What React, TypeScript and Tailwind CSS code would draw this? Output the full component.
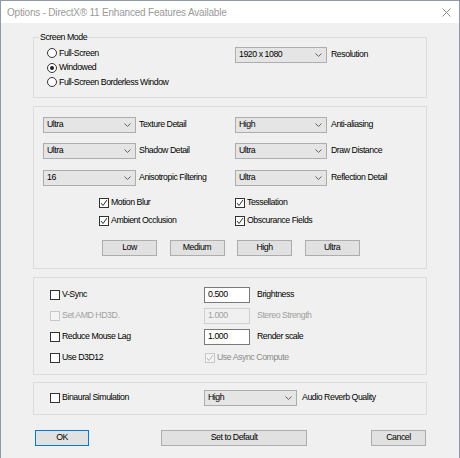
import React from "react"

const Chevron = () => (
    <svg width="7" height="4" viewBox="0 0 7 4" className="shrink-0">
        <path d="M0.5 0.5 L3.5 3.5 L6.5 0.5" fill="none" stroke="#606060" strokeWidth="1" />
    </svg>
)

const Select = ({ value, w }: { value: string, w: string }) => (
    <div className={`flex items-center justify-between h-[16px] border border-[#adadad] bg-[#e5e5e5] pl-[3px] pr-[4px] shrink-0 ${w}`}>
        <span>{value}</span>
        <Chevron />
    </div>
)

const Check = ({ label, checked = false, disabled = false, labelClass = "" }: { label: string, checked?: boolean, disabled?: boolean, labelClass?: string }) => (
    <div className="flex items-center">
        <div className={`w-[10px] h-[10px] border flex items-center justify-center shrink-0 ${disabled ? "border-[#c8c8c8] bg-[#f4f4f4]" : "border-[#333] bg-white"}`}>
            {checked && (
                <svg width="8" height="8" viewBox="0 0 8 8">
                    <path d="M1 4 L3 6.5 L7 1" fill="none" stroke={disabled ? "#b8b8b8" : "#333"} strokeWidth="1" />
                </svg>
            )}
        </div>
        <span className={`ml-[2px] ${disabled ? "text-[#a0a0a0]" : ""} ${labelClass}`}>{label}</span>
    </div>
)

const Radio = ({ label, checked = false }: { label: string, checked?: boolean }) => (
    <div className="flex items-center h-[14.5px]">
        <div className="w-[10px] h-[10px] rounded-full border border-[#333] bg-white flex items-center justify-center shrink-0">
            {checked && <div className="w-[4px] h-[4px] rounded-full bg-[#222]" />}
        </div>
        <span className="ml-[2px]">{label}</span>
    </div>
)

const Btn = ({ label, className = "" }: { label: string, className?: string }) => (
    <div className={`h-[16px] flex items-center justify-center border bg-[#e1e1e1] shrink-0 ${className}`}>
        {label}
    </div>
)

const TextBox = ({ value, disabled = false }: { value: string, disabled?: boolean }) => (
    <div className={`w-[46px] h-[16px] border flex items-center pl-[3px] shrink-0 ${disabled ? "border-[#d0d0d0] bg-[#f0f0f0] text-[#a0a0a0]" : "border-[#7a7a7a] bg-white"}`}>
        {value}
    </div>
)

const Group = ({ legend, className = "", children }: { legend?: string, className?: string, children: React.ReactNode }) => (
    <div className={`relative border border-[#dcdcdc] ${className}`}>
        {legend && (
            <span className="absolute -top-[7px] left-[5px] bg-[#f0f0f0] px-[1px] leading-[13px]">{legend}</span>
        )}
        {children}
    </div>
)

export default function App() {
    return (
        <div className="w-[460px] h-[458px] bg-[#f0f0f0] border-x border-t border-[#8d9aa8] flex flex-col text-[8.75px] tracking-[-0.45px] text-black font-['Liberation_Sans',Arial,sans-serif] overflow-hidden">
            {/* title bar */}
            <div className="h-[22px] bg-white flex items-center justify-between pl-[6px] pr-[8px] shrink-0">
                <span className="text-[10px] tracking-[-0.2px] text-[#9a9a9a]">Options - DirectX® 11 Enhanced Features Available</span>
                <svg width="9" height="9" viewBox="0 0 9 9">
                    <path d="M0.5 0.5 L8.5 8.5 M8.5 0.5 L0.5 8.5" stroke="#8a8a8a" strokeWidth="1" />
                </svg>
            </div>

            <div className="px-[32px] flex flex-col">
                {/* Screen mode */}
                <Group legend="Screen Mode" className="mt-[14px] h-[61px] flex">
                    <div className="w-[201px] pl-[13px] pt-[8px] flex flex-col">
                        <Radio label="Full-Screen" />
                        <Radio label="Windowed" checked />
                        <Radio label="Full-Screen Borderless Window" />
                    </div>
                    <div className="pt-[9px] flex items-start">
                        <Select value="1920 x 1080" w="w-[92px]" />
                        <span className="ml-[4px] h-[16px] flex items-center">Resolution</span>
                    </div>
                </Group>

                {/* Detail settings */}
                <Group className="mt-[8px] h-[163px] pt-[10px] flex flex-col">
                    {[
                        ["Ultra", "Texture Detail", "High", "Anti-aliasing", ""],
                        ["Ultra", "Shadow Detail", "Ultra", "Draw Distance", "mt-[10px]"],
                        ["16", "Anisotropic Filtering", "Ultra", "Reflection Detail", "mt-[11px]"],
                    ].map(([lv, ll, rv, rl, mt]) => (
                        <div key={ll} className={`flex h-[16px] ${mt}`}>
                            <div className="w-[201px] pl-[9px] flex items-center">
                                <Select value={lv} w="w-[93px]" />
                                <span className="ml-[3px]">{ll}</span>
                            </div>
                            <div className="flex items-center">
                                <Select value={rv} w="w-[92px]" />
                                <span className="ml-[4px]">{rl}</span>
                            </div>
                        </div>
                    ))}
                    <div className="flex h-[14px] mt-[10px]">
                        <div className="w-[201px] pl-[65px] flex items-center">
                            <Check label="Motion Blur" checked />
                        </div>
                        <Check label="Tessellation" checked />
                    </div>
                    <div className="flex h-[14px] mt-[4px]">
                        <div className="w-[201px] pl-[65px] flex items-center">
                            <Check label="Ambient Occlusion" checked />
                        </div>
                        <Check label="Obscurance Fields" checked />
                    </div>
                    <div className="flex gap-[12.5px] pl-[68px] mt-[12px]">
                        <Btn label="Low" className="w-[55px] border-[#adadad]" />
                        <Btn label="Medium" className="w-[55px] border-[#adadad]" />
                        <Btn label="High" className="w-[55px] border-[#adadad]" />
                        <Btn label="Ultra" className="w-[55px] border-[#adadad]" />
                    </div>
                </Group>

                {/* Misc settings */}
                <Group className="mt-[8px] h-[98px] pt-[9px] flex flex-col">
                    <div className="flex h-[16px] items-center">
                        <div className="w-[170px] pl-[16px]"><Check label="V-Sync" /></div>
                        <TextBox value="0.500" />
                        <span className="ml-[7px]">Brightness</span>
                    </div>
                    <div className="flex h-[16px] items-center mt-[5px]">
                        <div className="w-[170px] pl-[16px]"><Check label="Set AMD HD3D." disabled /></div>
                        <TextBox value="1.000" disabled />
                        <span className="ml-[7px] text-[#a0a0a0]">Stereo Strength</span>
                    </div>
                    <div className="flex h-[16px] items-center mt-[5px]">
                        <div className="w-[170px] pl-[16px]"><Check label="Reduce Mouse Lag" /></div>
                        <TextBox value="1.000" />
                        <span className="ml-[7px]">Render scale</span>
                    </div>
                    <div className="flex h-[16px] items-center mt-[5px]">
                        <div className="w-[171px] pl-[16px]"><Check label="Use D3D12" /></div>
                        <Check label="Use Async Compute" checked disabled labelClass="!text-[#8a8a8a]" />
                    </div>
                </Group>

                {/* Audio */}
                <Group className="mt-[7px] h-[33px] pt-[7px]">
                    <div className="flex h-[16px] items-center">
                        <div className="w-[170px] pl-[16px]"><Check label="Binaural Simulation" /></div>
                        <Select value="High" w="w-[93px]" />
                        <span className="ml-[5px]">Audio Reverb Quality</span>
                    </div>
                </Group>

                {/* Dialog buttons */}
                <div className="flex mt-[15px]">
                    <Btn label="OK" className="ml-[2px] w-[54px] border-[#0078d7]" />
                    <Btn label="Set to Default" className="ml-[72px] w-[146px] border-[#adadad]" />
                    <Btn label="Cancel" className="ml-[64px] w-[55px] border-[#adadad]" />
                </div>
            </div>
        </div>
    )
}
